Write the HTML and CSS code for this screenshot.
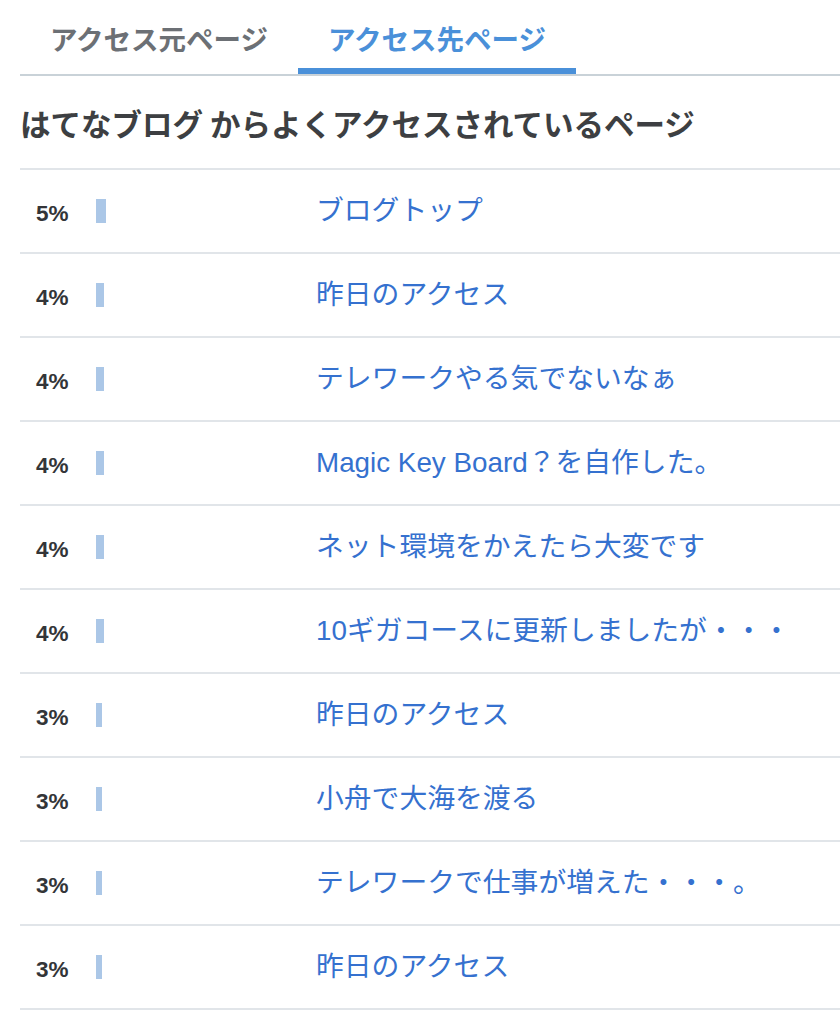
FILE: index.html
```html
<!DOCTYPE html>
<html lang="ja">
<head>
<meta charset="utf-8">
<title>アクセス先ページ</title>
<link rel="stylesheet" href="styles.css">
</head>
<body>
<div class="panel">
  <ul class="tabs">
    <li class="tab">アクセス元ページ</li>
    <li class="tab is-active">アクセス先ページ</li>
  </ul>
  <h2 class="heading">はてなブログ からよくアクセスされているページ</h2>
  <table class="ranking">
    <tbody>
      <tr><td class="rate"><span class="pct">5%</span><span class="bar" style="width:10px"></span></td><td class="page"><a href="#">ブログトップ</a></td></tr>
      <tr><td class="rate"><span class="pct">4%</span><span class="bar" style="width:8px"></span></td><td class="page"><a href="#">昨日のアクセス</a></td></tr>
      <tr><td class="rate"><span class="pct">4%</span><span class="bar" style="width:8px"></span></td><td class="page"><a href="#">テレワークやる気でないなぁ</a></td></tr>
      <tr><td class="rate"><span class="pct">4%</span><span class="bar" style="width:8px"></span></td><td class="page"><a href="#">Magic Key Board？を自作した。</a></td></tr>
      <tr><td class="rate"><span class="pct">4%</span><span class="bar" style="width:8px"></span></td><td class="page"><a href="#">ネット環境をかえたら大変です</a></td></tr>
      <tr><td class="rate"><span class="pct">4%</span><span class="bar" style="width:8px"></span></td><td class="page"><a href="#">10ギガコースに更新しましたが・・・</a></td></tr>
      <tr><td class="rate"><span class="pct">3%</span><span class="bar" style="width:6px"></span></td><td class="page"><a href="#">昨日のアクセス</a></td></tr>
      <tr><td class="rate"><span class="pct">3%</span><span class="bar" style="width:6px"></span></td><td class="page"><a href="#">小舟で大海を渡る</a></td></tr>
      <tr><td class="rate"><span class="pct">3%</span><span class="bar" style="width:6px"></span></td><td class="page"><a href="#">テレワークで仕事が増えた・・・。</a></td></tr>
      <tr><td class="rate"><span class="pct">3%</span><span class="bar" style="width:6px"></span></td><td class="page"><a href="#">昨日のアクセス</a></td></tr>
    </tbody>
  </table>
</div>
</body>
</html>
```

FILE: styles.css
```css
html, body {
  margin: 0;
  padding: 0;
  background: #ffffff;
}

body {
  font-family: "Liberation Sans", "Noto Sans CJK JP", sans-serif;
  color: #3d3f42;
  overflow: hidden;
}

.panel {
  padding-left: 20px;
}

.tabs {
  list-style: none;
  margin: 0;
  padding: 0;
  display: flex;
  border-bottom: 2px solid #c9d2d8;
}

.tab {
  width: 278px;
  box-sizing: border-box;
  padding: 18px 0 0;
  height: 74px;
  text-align: center;
  font-family: "Noto Sans CJK JP", sans-serif;
  font-size: 27.5px;
  font-weight: 700;
  line-height: 40px;
  color: #6c7075;
  border-bottom: 6px solid transparent;
}

.tab.is-active {
  color: #4a90d9;
  border-bottom-color: #4a90d9;
}

.heading {
  margin: 0;
  padding: 26px 0 0;
  height: 66px;
  font-family: "Noto Sans CJK JP", sans-serif;
  font-size: 30.5px;
  font-weight: 700;
  line-height: 42px;
  color: #3d3f42;
  white-space: nowrap;
  border-bottom: 2px solid #e1e5e9;
}

.ranking {
  width: 820px;
  border-collapse: collapse;
}

.ranking td {
  height: 82px;
  padding: 0;
  border-bottom: 2px solid #e1e5e9;
  vertical-align: middle;
}

.rate {
  width: 296px;
  padding-left: 16px !important;
  box-sizing: border-box;
}

.rate .pct,
.rate .bar {
  display: inline-block;
  vertical-align: middle;
}

.pct {
  width: 60px;
  font-family: "Liberation Sans", sans-serif;
  font-size: 22.5px;
  font-weight: 700;
  color: #333538;
  position: relative;
  top: 3px;
}

.bar {
  height: 24px;
  background: #abc7e7;
}

.page a {
  font-family: "Liberation Sans", "Noto Sans CJK JP", sans-serif;
  font-size: 27.8px;
  line-height: 40px;
  color: #3571cf;
  text-decoration: none;
  white-space: nowrap;
}
```
